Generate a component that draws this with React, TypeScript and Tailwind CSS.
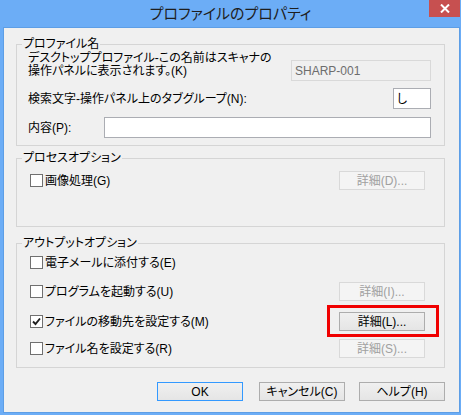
import type { ReactNode } from 'react';

function Checkbox({ checked = false }: { checked?: boolean }) {
    return (
        <span className="flex h-[13px] w-[13px] shrink-0 items-center justify-center border border-[#707070] bg-white">
            {checked && (
                <svg width="9" height="9" viewBox="0 0 9 9" aria-hidden>
                    <path d="M1 4.5 L3.5 7 L8 1.5" fill="none" stroke="#1f1f1f" strokeWidth="1.9" />
                </svg>
            )}
        </span>
    );
}

function Btn({ children, disabled, primary }: { children: ReactNode; disabled?: boolean; primary?: boolean }) {
    const tone = disabled
        ? 'border-[#d9d9d9] bg-[#f4f4f4] text-[#a0a0a0]'
        : primary
            ? 'border-[#3399ff] bg-gradient-to-b from-[#f0f0f0] to-[#e5e5e5] text-black'
            : 'border-[#adadad] bg-gradient-to-b from-[#f0f0f0] to-[#e5e5e5] text-black';
    return (
        <button
            type="button"
            disabled={disabled}
            className={`flex h-[19px] w-[86px] shrink-0 items-center justify-center border leading-[12px] ${tone}`}
        >
            {children}
        </button>
    );
}

function Group({ title, className, children }: { title: string; className: string; children: ReactNode }) {
    return (
        <div className={`relative border border-[#d5d5d5] ${className}`}>
            <span className="absolute left-[5px] top-[-8px] bg-[#f0f0f0] px-[1px] leading-[14px]">{title}</span>
            {children}
        </div>
    );
}

function CheckRow({ label, checked }: { label: string; checked?: boolean }) {
    return (
        <label className="flex items-center gap-[2px]">
            <Checkbox checked={checked} />
            <span>{label}</span>
        </label>
    );
}

export default function App() {
    return (
        <div className="flex h-[415px] w-[461px] flex-col bg-[#6cadf6] font-['Liberation_Sans','Noto_Sans_CJK_JP',sans-serif] text-[12px] leading-[12px] text-black [font-feature-settings:'palt']">
            {/* title bar */}
            <div className="grid h-[27px] shrink-0 grid-cols-[1fr_auto_1fr] items-start">
                <div />
                <div className="pt-[5px] text-[15px] leading-[17px] text-[#1e1e1e]">プロファイルのプロパティ</div>
                <div className="flex justify-end pr-[1px]">
                    <button type="button" aria-label="閉じる" className="flex h-[17px] w-[31px] items-center justify-center bg-[#c75050]">
                        <svg width="10" height="9" viewBox="0 0 10 9" aria-hidden>
                            <path d="M1 0.5 L9 8.5 M9 0.5 L1 8.5" stroke="white" strokeWidth="2" />
                        </svg>
                    </button>
                </div>
            </div>

            {/* client area */}
            <div className="mb-[2px] ml-[3px] mr-[1px] flex flex-1 flex-col border border-[#5d9ee6] bg-[#f0f0f0] pl-[12px] pr-[14px]">
                <Group title="プロファイル名" className="mt-[16px] pb-[7px] pl-[11px] pr-[13px] pt-[7px]">
                    <div className="flex items-start justify-between">
                        <p className="leading-[13px]">
                            デスクトッププロファイル-この名前はスキャナの
                            <br />
                            操作パネルに表示されます。(K)
                        </p>
                        <div className="mt-[8px] flex h-[21px] w-[140px] items-center border border-[#d9d9d9] bg-[#f0f0f0] pl-[3px] text-[#6d6d6d]">
                            SHARP-001
                        </div>
                    </div>
                    <div className="mt-[7px] flex h-[21px] items-center justify-between">
                        <span>検索文字-操作パネル上のタブグループ(N):</span>
                        <div className="flex h-[21px] w-[38px] items-center border border-[#abadb3] bg-white pl-[3px]">し</div>
                    </div>
                    <div className="mt-[8px] flex h-[21px] items-center">
                        <span className="w-[76px] shrink-0">内容(P):</span>
                        <div className="h-[21px] flex-1 border border-[#abadb3] bg-white" />
                    </div>
                </Group>

                <Group title="プロセスオプション" className="mt-[12px] pb-[36px] pl-[13px] pr-[19px] pt-[12px]">
                    <div className="flex h-[19px] items-center justify-between">
                        <CheckRow label="画像処理(G)" />
                        <Btn disabled>詳細(D)...</Btn>
                    </div>
                </Group>

                <Group title="アウトプットオプション" className="mt-[16px] pb-[9px] pl-[13px] pr-[19px] pt-[9px]">
                    <div className="flex h-[19px] items-center justify-between">
                        <CheckRow label="電子メールに添付する(E)" />
                    </div>
                    <div className="mt-[10px] flex h-[19px] items-center justify-between">
                        <CheckRow label="プログラムを起動する(U)" />
                        <Btn disabled>詳細(I)...</Btn>
                    </div>
                    <div className="mt-[11px] flex h-[19px] items-center justify-between">
                        <CheckRow label="ファイルの移動先を設定する(M)" checked />
                        <div className="relative">
                            <Btn>詳細(L)...</Btn>
                            <span className="pointer-events-none absolute -bottom-[6px] -left-[12px] -right-[14px] -top-[7px] border-[3px] border-[#f00000]" />
                        </div>
                    </div>
                    <div className="mt-[8px] flex h-[19px] items-center justify-between">
                        <CheckRow label="ファイル名を設定する(R)" />
                        <Btn disabled>詳細(S)...</Btn>
                    </div>
                </Group>

                <div className="mt-[14px] flex justify-end">
                    <Btn primary>OK</Btn>
                    <div className="ml-[16px]">
                        <Btn>キャンセル(C)</Btn>
                    </div>
                    <div className="ml-[14px]">
                        <Btn>ヘルプ(H)</Btn>
                    </div>
                </div>
            </div>
        </div>
    );
}
